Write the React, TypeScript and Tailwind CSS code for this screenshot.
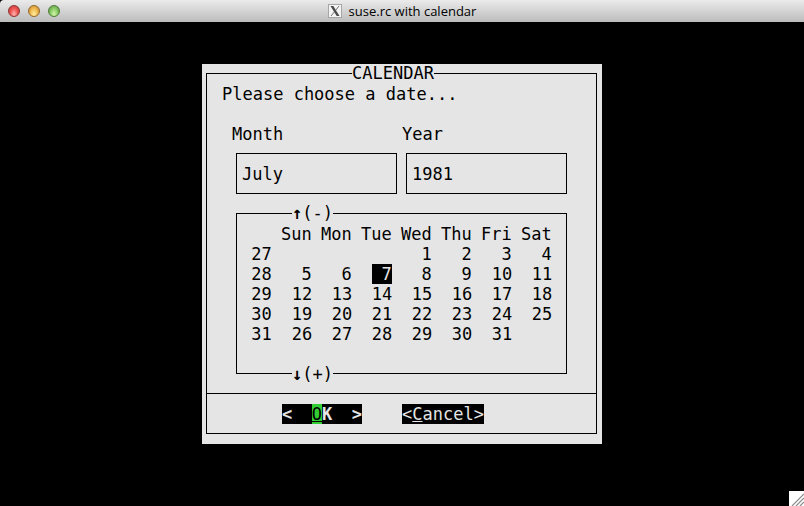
import { useMemo, useState } from 'react'

const MONTHS = [
  'January', 'February', 'March', 'April', 'May', 'June',
  'July', 'August', 'September', 'October', 'November', 'December',
]

const WEEKDAYS = ['Sun', 'Mon', 'Tue', 'Wed', 'Thu', 'Fri', 'Sat']

interface Week {
  number: number
  days: (number | null)[]
}

// ISO week number of the week holding the given Thursday
function weekNumber(thursday: Date): number {
  const start = Date.UTC(thursday.getUTCFullYear(), 0, 1)
  return Math.floor((thursday.getTime() - start) / 86400000 / 7) + 1
}

function buildWeeks(year: number, month: number): Week[] {
  const offset = new Date(Date.UTC(year, month, 1)).getUTCDay()
  const count = new Date(Date.UTC(year, month + 1, 0)).getUTCDate()
  const weeks: Week[] = []
  for (let first = 1 - offset; first <= count; first += 7) {
    weeks.push({
      number: weekNumber(new Date(Date.UTC(year, month, first + 4))),
      days: WEEKDAYS.map((_, i) => (first + i >= 1 && first + i <= count ? first + i : null)),
    })
  }
  return weeks
}

function TitleBar({ title }: { title: string }) {
  return (
    <header className="grid h-[22px] grid-cols-[1fr_auto_1fr] items-center rounded-tl-[4px] bg-linear-to-b from-[#ebebeb] to-[#bcbcbc] px-2">
      <div className="flex gap-2">
        <button aria-label="Close" className="size-3 rounded-full border border-[#8d3431] bg-radial-[at_50%_80%] from-[#ffb5b0] via-[#ee5553] to-[#b83634]" />
        <button aria-label="Minimize" className="size-3 rounded-full border border-[#96692a] bg-radial-[at_50%_80%] from-[#fff0a0] via-[#f0b950] to-[#b87f30]" />
        <button aria-label="Zoom" className="size-3 rounded-full border border-[#4d7d35] bg-radial-[at_50%_80%] from-[#d4f7a8] via-[#8acb68] to-[#558c40]" />
      </div>
      <h1 className="flex items-center gap-[7px] font-['Open_Sans',sans-serif] text-[13px] leading-5 font-medium text-black">
        <svg viewBox="0 0 14 14" className="size-[14px]" aria-hidden="true">
          <rect x="0.5" y="0.5" width="13" height="13" fill="#f4f4f4" stroke="#a6a6a6" />
          <path d="M2.5 2h2.8l6.2 10H8.7z" fill="#4a4a4a" />
          <path d="M11 2L7.8 6.2M6.2 8L3 12" stroke="#707070" strokeWidth="1" fill="none" />
        </svg>
        {title}
      </h1>
    </header>
  )
}

function ResizeGrip() {
  return (
    <svg viewBox="0 0 15 15" className="fixed right-0 bottom-0 size-[15px]" aria-hidden="true">
      <rect width="15" height="15" fill="#ffffff" />
      <path d="M3 15L15 3M7 15L15 7M11 15L15 11" stroke="#8c8c8c" strokeWidth="1.2" />
    </svg>
  )
}

export default function App() {
  const [month, setMonth] = useState(6)
  const [year, setYear] = useState('1981')
  const [selected, setSelected] = useState(7)

  const weeks = useMemo(() => buildWeeks(Number(year) || 1981, month), [year, month])

  const shiftMonth = (step: number) => {
    const next = month + step
    if (next < 0 || next > 11) setYear(String(Number(year) + step))
    setMonth((next + 12) % 12)
  }

  return (
    <div className="min-h-screen bg-black">
      <TitleBar title="suse.rc with calendar" />

      <main className="mx-auto mt-[42px] max-w-[400px] bg-[#e5e5e5] pr-[5px] pb-[10px] pl-1 font-['DejaVu_Sans_Mono',monospace] text-[17px] leading-5 text-black">
        <form onSubmit={(e) => e.preventDefault()}>
          <fieldset className="min-w-0 border border-black pt-px">
            <legend className="ml-[145px] leading-[19px]">CALENDAR</legend>

            <p className="px-[15px]">Please choose a date...</p>

            <div className="mx-[29px] mt-5 grid grid-cols-2 gap-x-[9px]">
              <div>
                <label htmlFor="month" className="-ml-1 block">Month</label>
                <select
                  id="month"
                  value={month}
                  onChange={(e) => setMonth(Number(e.target.value))}
                  className="mt-[9px] block h-[41px] w-full appearance-none border border-black px-[5px]"
                >
                  {MONTHS.map((name, i) => (
                    <option key={name} value={i}>{name}</option>
                  ))}
                </select>
              </div>
              <div>
                <label htmlFor="year" className="-ml-1 block">Year</label>
                <input
                  id="year"
                  value={year}
                  onChange={(e) => setYear(e.target.value)}
                  className="mt-[9px] block h-[41px] w-full border border-black px-[5px]"
                />
              </div>
            </div>

            <div className="mx-[29px] mt-[9px]">
              <fieldset className="min-h-[171px] min-w-0 border border-black pt-px">
                <legend className="ml-[55px]">
                  <button type="button" onClick={() => shiftMonth(-1)} className="block">
                    <span className="font-bold">↑</span>(-)
                  </button>
                </legend>
                <table className="mx-auto table-fixed border-collapse text-right">
                  <thead>
                    <tr>
                      <th className="w-5 p-0" aria-label="Week" />
                      {WEEKDAYS.map((day) => (
                        <th key={day} className="w-10 p-0 text-right font-normal">{day}</th>
                      ))}
                    </tr>
                  </thead>
                  <tbody>
                    {weeks.map((week) => (
                      <tr key={week.number}>
                        <th className="p-0 font-normal">{week.number}</th>
                        {week.days.map((day, i) => (
                          <td key={i} className="p-0">
                            {day && (
                              <button
                                type="button"
                                onClick={() => setSelected(day)}
                                className={`ml-auto block w-5 text-right ${day === selected ? 'bg-black text-[#e5e5e5]' : ''}`}
                              >
                                {day}
                              </button>
                            )}
                          </td>
                        ))}
                      </tr>
                    ))}
                  </tbody>
                </table>
              </fieldset>
              <button
                type="button"
                onClick={() => shiftMonth(1)}
                className="relative -mt-[10px] ml-14 block bg-[#e5e5e5]"
              >
                <span className="font-bold">↓</span>(+)
              </button>
            </div>

            <div className="mt-[9px] flex justify-center gap-10 border-t border-black pt-[10px] pr-[37px] pb-[9px]">
              <button type="submit" className="flex w-20 justify-between bg-black font-bold text-[#e5e5e5]">
                <span>&lt;</span>
                <span>
                  <span className="inline-block bg-[#32cd32] font-normal text-black underline">O</span>K
                </span>
                <span>&gt;</span>
              </button>
              <button type="button" className="bg-black text-[#e5e5e5]">
                &lt;<span className="underline">C</span>ancel&gt;
              </button>
            </div>
          </fieldset>
        </form>
      </main>

      <ResizeGrip />
    </div>
  )
}
